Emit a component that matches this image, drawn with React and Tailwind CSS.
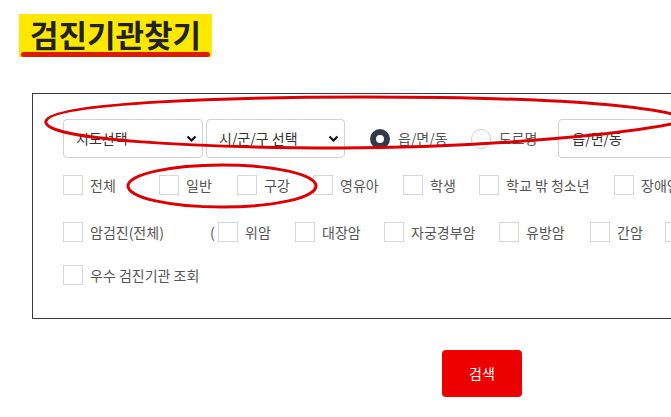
import React from "react";

function Check({ label, w }) {
  return (
    <div className="flex items-center shrink-0" style={{ width: w }}>
      <span className="w-[20px] h-[20px] border border-[#d6d6d6] bg-white shrink-0" />
      <span className="ml-[7px] text-[14px] text-[#555] whitespace-nowrap leading-none">{label}</span>
    </div>
  );
}

function Chevron() {
  return (
    <svg width="11" height="8" viewBox="0 0 11 8" className="shrink-0">
      <path d="M1.5 1.5 L5.5 5.5 L9.5 1.5" fill="none" stroke="#111" strokeWidth="2.2" />
    </svg>
  );
}

export default function App() {
  return (
    <div className="relative w-[671px] h-[417px] overflow-hidden bg-white font-['Noto_Sans_CJK_KR',sans-serif]">
      <div className="pl-[19px] pt-[14px]">
        <div className="relative w-[193px] h-[43px] bg-[#ffe800] flex justify-center">
          <span className="text-[31px] font-bold text-[#222] leading-[40px] whitespace-nowrap">검진기관찾기</span>
          <div className="absolute left-[2px] right-[2px] bottom-0 h-[5px] rounded-full bg-[#e01a00]" />
        </div>
      </div>

      <div className="ml-[32px] mt-[36px] w-[720px] h-[226px] border border-[#3a3a3a] pl-[30px] pt-[25px]">
        <div className="flex items-center h-[39px] whitespace-nowrap">
          <div className="shrink-0 w-[140px] h-[39px] border border-[#d0d0d0] rounded-[4px] flex items-center justify-between pl-[12px] pr-[5px]">
            <span className="text-[14px] text-[#333]">시도선택</span>
            <Chevron />
          </div>
          <div className="shrink-0 ml-[3px] w-[139px] h-[39px] border border-[#d0d0d0] rounded-[4px] flex items-center justify-between pl-[12px] pr-[5px]">
            <span className="text-[14px] text-[#333]">시/군/구 선택</span>
            <Chevron />
          </div>
          <span className="ml-[25px] w-[20px] h-[20px] rounded-full border-[6px] border-[#343a4a] bg-white shrink-0" />
          <span className="shrink-0 ml-[8px] text-[14px] text-[#555]">읍/면/동</span>
          <span className="ml-[23px] w-[20px] h-[20px] rounded-full border border-[#cfcfcf] bg-white shrink-0" />
          <span className="shrink-0 ml-[8px] text-[14px] text-[#555]">도로명</span>
          <div className="shrink-0 ml-[21px] w-[200px] h-[39px] border border-[#d0d0d0] rounded-[4px] flex items-center pl-[13px]">
            <span className="text-[14px] text-[#333]">읍/면/동</span>
          </div>
        </div>

        <div className="flex items-center mt-[17px] h-[20px]">
          <Check label="전체" w={96} />
          <Check label="일반" w={78} />
          <Check label="구강" w={76} />
          <Check label="영유아" w={90} />
          <Check label="학생" w={76} />
          <Check label="학교 밖 청소년" w={135} />
          <Check label="장애인" w={90} />
        </div>

        <div className="flex items-center mt-[27px] h-[20px]">
          <Check label="암검진(전체)" w={147} />
          <span className="shrink-0 w-[8px] text-[14px] text-[#555] leading-none">(</span>
          <Check label="위암" w={77} />
          <Check label="대장암" w={89} />
          <Check label="자궁경부암" w={115} />
          <Check label="유방암" w={91} />
          <Check label="간암" w={75} />
          <Check label="폐암" w={75} />
        </div>

        <div className="flex items-center mt-[23px] h-[20px]">
          <Check label="우수 검진기관 조회" w={200} />
        </div>
      </div>

      <div className="ml-[442px] mt-[31px] w-[80px] h-[47px] rounded-[4px] bg-[#ec0000] flex items-center justify-center">
        <span className="text-[14px] text-white">검색</span>
      </div>

      <svg className="absolute inset-0 pointer-events-none" width="671" height="417" viewBox="0 0 671 417">
        <path
          d="M46 121 C52 102 240 97 363 97 C500 97 640 101 690 119 C650 133 480 148 340 148 C200 148 40 140 46 121 Z"
          fill="none"
          stroke="#dd0000"
          strokeWidth="3"
        />
        <ellipse cx="222" cy="186" rx="94" ry="21" fill="none" stroke="#dd0000" strokeWidth="3" />
      </svg>
    </div>
  );
}
